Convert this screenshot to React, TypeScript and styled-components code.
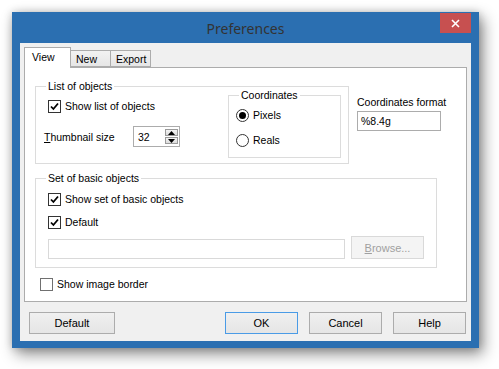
import React from "react";
import styled, { createGlobalStyle } from "styled-components";

const GlobalStyle = createGlobalStyle`
  html, body {
    margin: 0;
    padding: 0;
    background: #ffffff;
  }
  body {
    font-family: "Liberation Sans", Arial, sans-serif;
    font-size: 10.5px;
    color: #000;
  }
  #root {
    width: 499px;
    height: 369px;
    overflow: hidden;
  }
`;

const Desktop = styled.div`
  width: 499px;
  height: 369px;
  box-sizing: border-box;
  padding: 12px 0 0 12px;
`;

const Window = styled.div`
  width: 467px;
  height: 336px;
  box-sizing: border-box;
  padding: 0 8px 7px 8px;
  background: #2b6fb1;
  display: flex;
  flex-direction: column;
  box-shadow: 4px 6px 14px rgba(0, 0, 0, 0.45), 0 0 8px rgba(0, 0, 0, 0.18);
`;

const TitleBar = styled.div`
  height: 31px;
  flex: none;
  display: grid;
  grid-template-columns: 1fr auto 1fr;
  align-items: center;
`;

const Title = styled.div`
  grid-column: 2;
  font-family: "Noto Sans", "Open Sans", sans-serif;
  font-size: 14px;
  color: #333;
  padding-top: 1px;
`;

const CloseButton = styled.div`
  grid-column: 3;
  justify-self: end;
  align-self: start;
  margin-top: 1px;
  width: 31px;
  height: 20px;
  background: #c75050;
  display: flex;
  align-items: center;
  justify-content: center;
`;

const Client = styled.div`
  height: 298px;
  box-sizing: border-box;
  background: #f0f0f0;
  padding: 4px 4px 0 4px;
  display: flex;
  flex-direction: column;
`;

const TabStrip = styled.div`
  height: 20px;
  display: flex;
  align-items: flex-end;
`;

const Tab = styled.div<{ $active?: boolean; $width: number }>`
  position: relative;
  width: ${(p) => p.$width}px;
  height: ${(p) => (p.$active ? 21 : 17)}px;
  box-sizing: border-box;
  margin-left: ${(p) => (p.$active ? 0 : -1)}px;
  margin-bottom: ${(p) => (p.$active ? -1 : 0)}px;
  z-index: ${(p) => (p.$active ? 2 : 1)};
  border: 1px solid #acacac;
  border-bottom: ${(p) => (p.$active ? "none" : "1px solid #acacac")};
  background: ${(p) =>
    p.$active ? "#ffffff" : "linear-gradient(#f2f2f2, #e6e6e6)"};
  display: flex;
  align-items: center;
  padding: ${(p) => (p.$active ? "0 0 2px 7px" : "0 0 0 5px")};
  font-size: 10.5px;
  white-space: nowrap;
`;

const Panel = styled.div`
  width: 443px;
  height: 235px;
  box-sizing: border-box;
  border: 1px solid #acacac;
  background: #fff;
  padding: 18px 0 0 10px;
  display: flex;
  flex-direction: column;
`;

const TopRow = styled.div`
  display: flex;
  align-items: flex-start;
  gap: 8px;
`;

const GroupBox = styled.div<{ $width: number; $height: number }>`
  position: relative;
  flex: none;
  width: ${(p) => p.$width}px;
  height: ${(p) => p.$height}px;
  box-sizing: border-box;
  border: 1px solid #dcdcdc;
`;

const GroupLabel = styled.span`
  position: absolute;
  top: -7px;
  left: 10px;
  padding: 0 2px;
  background: #fff;
  line-height: 13px;
  white-space: nowrap;
`;

const ListGroupBody = styled.div`
  display: flex;
  justify-content: space-between;
  align-items: flex-start;
`;

const LeftColumn = styled.div`
  display: flex;
  flex-direction: column;
  padding: 13px 0 0 12px;
`;

const CoordGroupBody = styled.div`
  display: flex;
  flex-direction: column;
  gap: 12px;
  padding: 13px 0 0 7px;
`;

const CoordGroupWrap = styled.div`
  margin: 8px 7px 0 0;
`;

const OptionRow = styled.label<{ $indent?: number; $top?: number }>`
  display: flex;
  align-items: center;
  gap: 4px;
  height: 13px;
  line-height: 13px;
  white-space: nowrap;
  margin-left: ${(p) => p.$indent ?? 0}px;
  margin-top: ${(p) => p.$top ?? 0}px;
`;

const Box = styled.span<{ $dim?: boolean }>`
  width: 13px;
  height: 13px;
  box-sizing: border-box;
  border: 1px solid ${(p) => (p.$dim ? "#707070" : "#333")};
  background: #fff;
  display: flex;
  align-items: center;
  justify-content: center;
  flex: none;
`;

const RadioCircle = styled.span`
  width: 13px;
  height: 13px;
  box-sizing: border-box;
  border: 1px solid #333;
  border-radius: 50%;
  background: #fff;
  display: flex;
  align-items: center;
  justify-content: center;
  flex: none;
`;

const RadioDot = styled.span`
  width: 7px;
  height: 7px;
  border-radius: 50%;
  background: #000;
`;

const ThumbRow = styled.div`
  display: flex;
  align-items: center;
  margin: 13px 0 0 -4px;
`;

const ThumbLabel = styled.span`
  width: 89px;
`;

const SpinBox = styled.div`
  width: 47px;
  height: 21px;
  box-sizing: border-box;
  border: 1px solid #acacac;
  background: #fff;
  display: flex;
  align-items: center;
  justify-content: space-between;
  padding: 0 1px 0 4px;
`;

const SpinButtons = styled.div`
  display: flex;
  flex-direction: column;
  gap: 1px;
`;

const SpinButton = styled.div`
  width: 13px;
  height: 7px;
  box-sizing: border-box;
  border: 1px solid #9a9a9a;
  background: linear-gradient(#f4f4f4, #dcdcdc);
  display: flex;
  align-items: center;
  justify-content: center;
`;

const FormatColumn = styled.div`
  display: flex;
  flex-direction: column;
  gap: 3px;
  padding-top: 10px;
`;

const TextInput = styled.div<{ $width: number; $dim?: boolean }>`
  width: ${(p) => p.$width}px;
  height: 20px;
  box-sizing: border-box;
  border: 1px solid ${(p) => (p.$dim ? "#d9d9d9" : "#acacac")};
  background: #fff;
  padding-left: 3px;
  display: flex;
  align-items: center;
`;

const BasicGroupWrap = styled.div`
  margin-top: 14px;
`;

const BasicGroupBody = styled.div`
  display: flex;
  flex-direction: column;
  padding: 14px 11px 0 12px;
`;

const PathRow = styled.div`
  display: flex;
  align-items: flex-end;
  gap: 6px;
  margin-top: 7px;
`;

const Button = styled.div<{ $width: number; $focused?: boolean; $disabled?: boolean }>`
  width: ${(p) => p.$width}px;
  height: ${(p) => (p.$disabled ? 23 : 22)}px;
  box-sizing: border-box;
  border: 1px solid ${(p) => (p.$focused ? "#4a9be6" : p.$disabled ? "#d9d9d9" : "#acacac")};
  background: ${(p) => (p.$disabled ? "#f4f4f4" : "linear-gradient(#f0f0f0, #e5e5e5)")};
  color: ${(p) => (p.$disabled ? "#a0a0a0" : "#000")};
  display: flex;
  align-items: center;
  justify-content: center;
  font-size: 11px;
  flex: none;
`;

const ButtonRow = styled.div`
  display: flex;
  align-items: center;
  gap: 11px;
  margin-top: 10px;
  padding: 0 1px 0 5px;
`;

const Spacer = styled.div`
  flex: 1;
`;

const Check = () => (
  <svg width="9" height="9" viewBox="0 0 9 9">
    <path d="M1 4.5 L3.4 7 L8 1.5" stroke="#000" strokeWidth="1.8" fill="none" />
  </svg>
);

const CheckBox: React.FC<{ checked?: boolean; label: string; indent?: number; top?: number }> = ({
  checked,
  label,
  indent,
  top,
}) => (
  <OptionRow $indent={indent} $top={top}>
    <Box $dim={!checked}>{checked && <Check />}</Box>
    <span>{label}</span>
  </OptionRow>
);

const Radio: React.FC<{ checked?: boolean; label: string }> = ({ checked, label }) => (
  <OptionRow>
    <RadioCircle>{checked && <RadioDot />}</RadioCircle>
    <span>{label}</span>
  </OptionRow>
);

const Arrow: React.FC<{ up?: boolean }> = ({ up }) => (
  <svg width="7" height="4" viewBox="0 0 7 4">
    <path d={up ? "M0 4 L3.5 0 L7 4 Z" : "M0 0 L3.5 4 L7 0 Z"} fill="#000" />
  </svg>
);

const App: React.FC = () => {
  return (
    <Desktop>
      <GlobalStyle />
      <Window>
        <TitleBar>
          <Title>Preferences</Title>
          <CloseButton>
            <svg width="9" height="9" viewBox="0 0 9 9">
              <path d="M1 1 L8 8 M8 1 L1 8" stroke="#fff" strokeWidth="1.6" />
            </svg>
          </CloseButton>
        </TitleBar>
        <Client>
          <TabStrip>
            <Tab $active $width={47}>View</Tab>
            <Tab $width={41}>New</Tab>
            <Tab $width={41}>Export</Tab>
          </TabStrip>
          <Panel>
            <TopRow>
              <GroupBox $width={314} $height={78}>
                <GroupLabel>List of objects</GroupLabel>
                <ListGroupBody>
                  <LeftColumn>
                    <CheckBox checked label="Show list of objects" />
                    <ThumbRow>
                      <ThumbLabel>
                        <u>T</u>humbnail size
                      </ThumbLabel>
                      <SpinBox>
                        <span>32</span>
                        <SpinButtons>
                          <SpinButton>
                            <Arrow up />
                          </SpinButton>
                          <SpinButton>
                            <Arrow />
                          </SpinButton>
                        </SpinButtons>
                      </SpinBox>
                    </ThumbRow>
                  </LeftColumn>
                  <CoordGroupWrap>
                    <GroupBox $width={113} $height={63}>
                      <GroupLabel>Coordinates</GroupLabel>
                      <CoordGroupBody>
                        <Radio checked label="Pixels" />
                        <Radio label="Reals" />
                      </CoordGroupBody>
                    </GroupBox>
                  </CoordGroupWrap>
                </ListGroupBody>
              </GroupBox>
              <FormatColumn>
                <span>Coordinates format</span>
                <TextInput $width={84}>%8.4g</TextInput>
              </FormatColumn>
            </TopRow>
            <BasicGroupWrap>
              <GroupBox $width={402} $height={90}>
                <GroupLabel>Set of basic objects</GroupLabel>
                <BasicGroupBody>
                  <CheckBox checked label="Show set of basic objects" />
                  <CheckBox checked label="Default" top={10} />
                  <PathRow>
                    <TextInput $width={297} $dim />
                    <Button $width={73} $disabled>
                      <span>
                        <u>B</u>rowse...
                      </span>
                    </Button>
                  </PathRow>
                </BasicGroupBody>
              </GroupBox>
            </BasicGroupWrap>
            <CheckBox label="Show image border" indent={5} top={10} />
          </Panel>
          <ButtonRow>
            <Button $width={86}>Default</Button>
            <Spacer />
            <Button $width={73} $focused>OK</Button>
            <Button $width={73}>Cancel</Button>
            <Button $width={73}>Help</Button>
          </ButtonRow>
        </Client>
      </Window>
    </Desktop>
  );
};

export default App;
